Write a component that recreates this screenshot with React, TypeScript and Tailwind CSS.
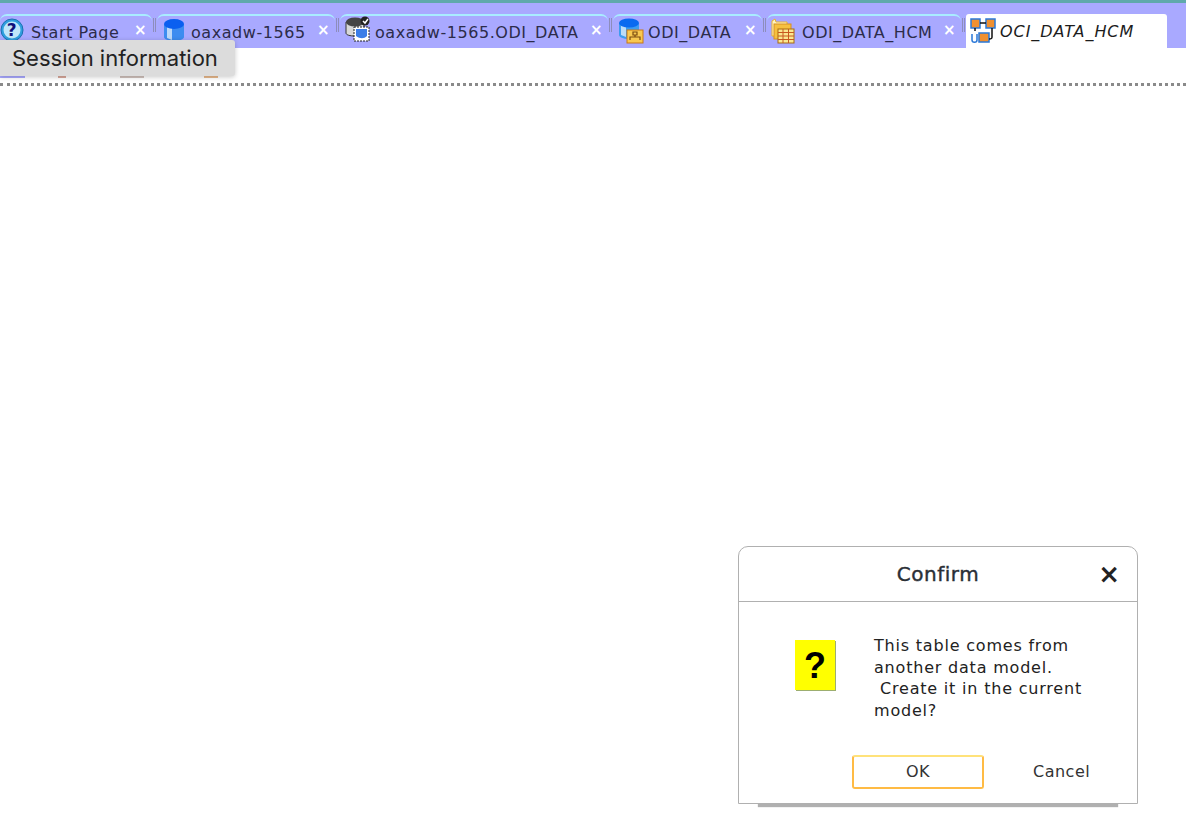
function HelpIcon() {
  return (
    <svg width="24" height="24" viewBox="0 0 24 24" className="-mt-[7px] shrink-0">
      <circle cx="12" cy="12" r="11" fill="#2f9fe0" stroke="#1b6fb0" strokeWidth="1" />
      <circle cx="12" cy="12" r="8.5" fill="#bfe6fa" />
      <text x="12" y="18" textAnchor="middle" fontSize="17" fontWeight="700" fill="#10107a" fontFamily="'DejaVu Sans', sans-serif">?</text>
    </svg>
  );
}

function DbIcon() {
  return (
    <svg width="24" height="24" viewBox="0 0 24 24" className="-mt-[6px] shrink-0">
      <path d="M2 6v13c0 2 4.500 4 10 4s10-2 10-4V6z" fill="#3d8cf0" />
      <path d="M5 9h5v13l-5-2z" fill="#bcd8f8" />
      <ellipse cx="12" cy="6" rx="10" ry="5" fill="#0a5ff0" />
    </svg>
  );
}

function ModelDbIcon() {
  return (
    <svg width="26" height="26" viewBox="0 0 26 26" className="-mt-[8px] shrink-0">
      <path d="M1 6v11c0 2 4 3 9 3s9-1 9-3V6z" fill="#d8d8d8" stroke="#333" strokeWidth="1" />
      <ellipse cx="10" cy="6" rx="9" ry="4.500" fill="#444" />
      <rect x="9" y="11" width="15" height="14" fill="#fff" stroke="#222" strokeWidth="1" strokeDasharray="2 1" />
      <path d="M11 13h11v7c-3 3-7 3-11 0z" fill="#3b7de8" />
      <circle cx="20" cy="5" r="4.500" fill="#222" />
      <path d="M18 5l2 2 3-4" fill="none" stroke="#fff" strokeWidth="1.500" />
    </svg>
  );
}

function SchemaIcon() {
  return (
    <svg width="26" height="26" viewBox="0 0 26 26" className="-mt-[4px] shrink-0">
      <path d="M1 5v12c0 2 4 4 10 4s10-2 10-4V5z" fill="#3d9cf0" />
      <path d="M3 8h5v11l-5-2z" fill="#bcdcf8" />
      <ellipse cx="11" cy="5" rx="10" ry="4.500" fill="#0a6af0" />
      <rect x="9" y="12" width="16" height="13" fill="#f8c850" stroke="#c87818" strokeWidth="1" />
      <path d="M15 14h4v3h-4zM17 17v2M12 22v-3h10v3" fill="none" stroke="#7a4a10" strokeWidth="1.200" />
    </svg>
  );
}

function TablesIcon() {
  return (
    <svg width="26" height="26" viewBox="0 0 26 26" className="-mt-[4px] -ml-[3px] shrink-0">
      <path d="M3 3l3-2 1 3h11v4H6v10H3z" fill="#fff4c0" stroke="#e8b030" strokeWidth="1" />
      <rect x="5" y="6" width="17" height="15" fill="#f6c040" stroke="#d89020" strokeWidth="1" />
      <rect x="9" y="11" width="16" height="14" fill="#fbe890" stroke="#a86a10" strokeWidth="1" />
      <path d="M9 14.500h16M9 18h16M9 21.500h16M14 11v14M19.500 11v14" stroke="#c85a20" strokeWidth="1" />
    </svg>
  );
}

function DiagramIcon() {
  return (
    <svg width="26" height="26" viewBox="0 0 26 26" className="-mt-[2px] shrink-0">
      <rect x="1" y="1" width="9" height="9" fill="#f09030" stroke="#2a78d8" strokeWidth="1.500" />
      <rect x="16" y="1" width="9" height="9" fill="#f09030" stroke="#2a78d8" strokeWidth="1.500" />
      <rect x="9" y="15" width="10" height="9" fill="#f09030" stroke="#2a78d8" strokeWidth="1.500" />
      <path d="M10 5h6M22 10v9c0 2-1 2-3 2M5 10v3" fill="none" stroke="#111" strokeWidth="1.500" />
      <path d="M2 16v6c0 3 5 3 5 0v-6" fill="none" stroke="#2a78d8" strokeWidth="1.500" />
    </svg>
  );
}

const tabs = [
  { label: "Start Page", icon: <HelpIcon />, width: "w-[152px]", gap: "gap-[7px]", pad: "pl-0" },
  { label: "oaxadw-1565", icon: <DbIcon />, width: "w-[178px]", gap: "gap-[5px]", pad: "pl-[5px]" },
  { label: "oaxadw-1565.ODI_DATA", icon: <ModelDbIcon />, width: "w-[268px]", gap: "gap-[4px]", pad: "pl-[5px]" },
  { label: "ODI_DATA", icon: <SchemaIcon />, width: "w-[149px]", gap: "gap-[4px]", pad: "pl-[5px]" },
  { label: "ODI_DATA_HCM", icon: <TablesIcon />, width: "w-[194px]", gap: "gap-[7px]", pad: "pl-[5px]" },
];

export default function App() {
  return (
    <div className="relative h-[818px] w-[1186px] overflow-hidden bg-white font-['DejaVu_Sans',sans-serif]">
      <div className="h-[3px] bg-[#5fa9ab]" />

      <div className="flex h-[45px] items-end bg-[#a9a9ff] pt-[11px]">
        {tabs.map((tab) => (
          <div key={tab.label} className="flex h-full items-center">
            <div
              className={`flex h-full ${tab.width} ${tab.gap} ${tab.pad} items-center rounded-t-[7px] border-t-2 border-[#a9ecff] pr-[5px] pt-[2px] text-[16px] tracking-[0.55px] text-[#2c2c4a]`}
            >
              {tab.icon}
              <span className="flex-1 whitespace-nowrap">{tab.label}</span>
              <span className="-mt-[6px] text-[15px] font-bold leading-none text-white">×</span>
            </div>
            <div className="mx-[1px] mb-3 h-[14px] w-[3px] border-x border-[#8d8dbb]" />
          </div>
        ))}
        <div className="flex h-full w-[201px] items-center gap-[4px] rounded-t-[3px] bg-white pl-[4px] pt-[2px] text-[16px] italic tracking-[0.95px] text-[#1c1c1c]">
          <DiagramIcon />
          <span className="whitespace-nowrap">OCI_DATA_HCM</span>
        </div>
      </div>

      <div className="flex h-[38px] items-end gap-[33px] border-b-[3px] border-dotted border-[#8a8a8a]">
        <div className="mb-[5px] h-[3px] w-[25px] bg-[#a9a9ff]" />
        <div className="mb-[5px] h-[2px] w-[8px] bg-[#c0705a] opacity-60" />
        <div className="mb-[5px] ml-[21px] h-[2px] w-[24px] bg-[#b09a90] opacity-60" />
        <div className="mb-[5px] ml-[27px] h-[2px] w-[14px] bg-[#d88a40] opacity-60" />
      </div>

      <div className="absolute left-0 top-[40px] flex h-[36px] w-[235px] items-center rounded-r-[3px] bg-[#dcdcdc] pl-[12px] font-['Inter',sans-serif] text-[22px] text-[#222] shadow-[0_1px_5px_rgba(0,0,0,0.22)]">
        Session information
      </div>

      <div className="absolute left-[738px] top-[546px] flex h-[258px] w-[400px] flex-col rounded-t-[10px] border-[1.5px] border-[#b0b0b0] bg-white shadow-[0_23px_1px_-20px_#b0b0b0]">
        <div className="relative flex h-[55px] items-center justify-center border-b-[1.5px] border-[#b0b0b0]">
          <span className="text-[20px] tracking-[0.5px] text-[#2a2f36] [-webkit-text-stroke:0.4px_#2a2f36]">Confirm</span>
          <span className="absolute right-[17px] top-[11px] text-[26px] font-bold leading-[32px] text-[#222]">×</span>
        </div>

        <div className="flex pl-[56px] pt-[38px]">
          <div className="flex h-[50px] w-[40px] items-center justify-center bg-[#ffff00] pt-[2px] font-['Liberation_Sans',sans-serif] text-[36px] font-bold text-black shadow-[1px_1px_0_#9cae70]">
            ?
          </div>
          <p className="ml-[39px] -mt-[5px] w-[240px] text-[16px] leading-[21.500px] tracking-[0.8px] text-[#222]">
            This table comes from
            <br />
            another data model.
            <br />
            <span className="ml-[6px]">Create it in the current</span>
            <br />
            model?
          </p>
        </div>

        <div className="mt-auto flex items-center pb-[14px] pl-[113px] text-[16px] tracking-[0.5px] text-[#333]">
          <button className="h-[34px] w-[132px] rounded-[3px] border-2 border-[#ffbb44] border-t-[#ffe27a] bg-white text-[#333]">
            OK
          </button>
          <button className="ml-[49px] text-[#333]">Cancel</button>
        </div>
      </div>
    </div>
  );
}
